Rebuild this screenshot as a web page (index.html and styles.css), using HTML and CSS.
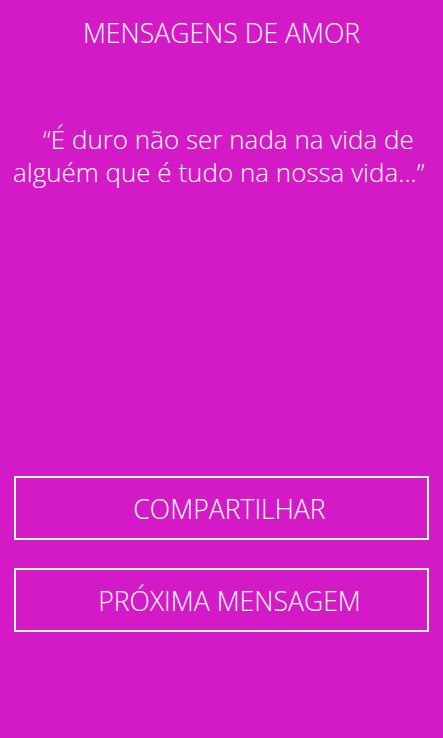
FILE: index.html
```html
<!DOCTYPE html>
<html lang="pt">
<head>
    <meta charset="UTF-8">
    <meta name="viewport" content="width=device-width, initial-scale=1.0">
    <title>Mensagens de Amor</title>
    <link rel="stylesheet" href="styles.css">
</head>
<body>
    <div id="app">
        <h1 class="title">MENSAGENS DE AMOR</h1>
        <p class="message">“É duro não ser nada na vida de alguém que é tudo na nossa vida...”</p>
        <div class="actions">
            <button class="action">COMPARTILHAR</button>
            <button class="action">PRÓXIMA MENSAGEM</button>
        </div>
    </div>
</body>
</html>
```

FILE: styles.css
```css
body {
    margin: 0;
    background-color: #d31ac6;
    font-family: "Open Sans", sans-serif;
    font-weight: 300;
    color: #ffffff;
}
#app {
    height: 738px;
    display: flex;
    flex-direction: column;
}
.title {
    margin: 0;
    padding-top: 15px;
    font-size: 26.6px;
    font-weight: 300;
    text-align: center;
    line-height: 36px;
}
.message {
    margin: 72px 0 0 0;
    padding: 0 13px;
    text-indent: 30px;
    font-size: 26px;
    line-height: 33px;
}
.actions {
    margin-top: auto;
    margin-bottom: 106px;
    padding: 0 14px;
    display: flex;
    flex-direction: column;
    gap: 28px;
}
.action {
    height: 64px;
    background: transparent;
    border: 2px solid #ffffff;
    color: #ffffff;
    font-family: inherit;
    font-weight: 300;
    font-size: 26.6px;
    padding: 2px 0 0 16px;
    cursor: pointer;
}
```
